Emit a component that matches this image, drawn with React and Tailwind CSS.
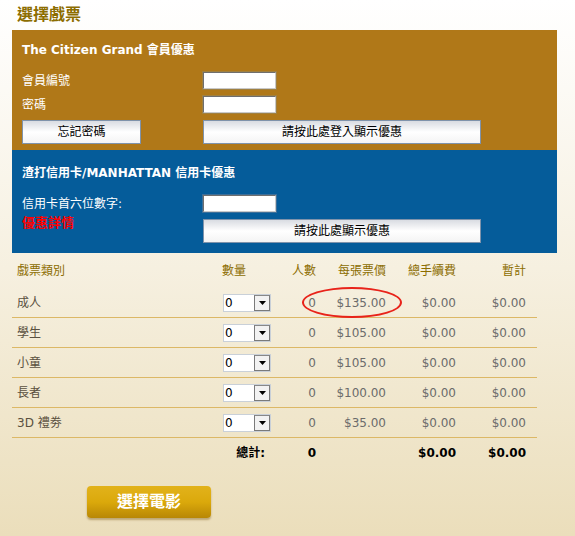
import React from "react";

const font = { fontFamily: '"DejaVu Sans", "Noto Sans CJK TC", sans-serif' };

const rows = [
  { name: "成人", price: "$135.00", circled: true },
  { name: "學生", price: "$105.00" },
  { name: "小童", price: "$105.00" },
  { name: "長者", price: "$100.00" },
  { name: "3D 禮劵", price: "$35.00" },
];

function TextBox({ ring }) {
  return (
    <div
      className={`w-[73px] h-[17px] bg-white border border-t-[#6f6f6f] border-l-[#6f6f6f] border-b-[#c9c9c9] border-r-[#c9c9c9] ${ring}`}
    />
  );
}

function PlainButton({ children, className }) {
  return (
    <button
      className={`h-[24px] border border-[#7f93ab] bg-gradient-to-b from-[#d9dce2] via-white to-[#f4f4f4] text-[12px] text-black ${className}`}
    >
      {children}
    </button>
  );
}

function QtySelect() {
  return (
    <div className="flex w-[48px] h-[18px] bg-white border border-[#c9d0d8] items-stretch">
      <span className="flex-1 pl-[1px] text-[12px] leading-[16px] text-black">0</span>
      <span className="w-[16px] border border-[#7a7a7a] border-t-[#888] bg-[#f2f2f2] flex items-center justify-center">
        <svg width="7" height="4" viewBox="0 0 7 4">
          <path d="M0 0h7L3.5 4z" fill="#000" />
        </svg>
      </span>
    </div>
  );
}

const cols = "grid grid-cols-[208px_56px_40px_70px_70px_70px]";

export default function App() {
  return (
    <div
      className="w-[575px] h-[536px] overflow-hidden bg-gradient-to-b from-white via-[#f6f0e0] to-[#ebdebb]"
      style={font}
    >
      <div className="h-[30px] pl-[17px] pt-[5px]">
        <h1 className="text-[16px] font-bold leading-[20px] text-[#8c6d00]">選擇戲票</h1>
      </div>

      {/* 會員優惠 */}
      <div className="ml-[12px] w-[545px] h-[120px] bg-[#b07818] px-[10px] pt-[10px] text-white">
        <div className="text-[12px] font-bold h-[20px] leading-[20px]">The Citizen Grand 會員優惠</div>
        <div className="mt-[12px] flex items-center h-[17px]">
          <span className="w-[181px] text-[12px]">會員編號</span>
          <TextBox ring="shadow-[0_0_0_1px_#a08040]" />
        </div>
        <div className="mt-[7px] flex items-center h-[17px]">
          <span className="w-[181px] text-[12px]">密碼</span>
          <TextBox ring="shadow-[0_0_0_1px_#a08040]" />
        </div>
        <div className="mt-[7px] flex">
          <PlainButton className="w-[119px]">忘記密碼</PlainButton>
          <PlainButton className="ml-[62px] w-[278px]">請按此處登入顯示優惠</PlainButton>
        </div>
      </div>

      {/* 信用卡優惠 */}
      <div className="ml-[12px] w-[545px] h-[103px] bg-[#055c9a] px-[10px] pt-[13px] text-white">
        <div className="text-[12px] font-bold h-[20px] leading-[20px]">渣打信用卡/MANHATTAN 信用卡優惠</div>
        <div className="mt-[12px] flex items-center h-[17px]">
          <span className="w-[181px] text-[12px]">信用卡首六位數字:</span>
          <TextBox ring="shadow-[0_0_0_1px_#3d6f99]" />
        </div>
        <div className="mt-[2px] flex items-start">
          <span className="w-[181px] text-[13px] font-bold text-[#ff0000] leading-[18px]">優惠詳情</span>
          <PlainButton className="mt-[5px] w-[278px]">請按此處顯示優惠</PlainButton>
        </div>
      </div>

      {/* 戲票表 */}
      <div className="ml-[12px] w-[525px] text-[12px]">
        <div className={`${cols} h-[35px] items-center text-[#8c6d00]`}>
          <span className="pl-[5px]">戲票類別</span>
          <span className="pl-[2px]">數量</span>
          <span className="text-right">人數</span>
          <span className="text-right">每張票價</span>
          <span className="text-right">總手續費</span>
          <span className="text-right">暫計</span>
        </div>
        {rows.map((r) => (
          <div
            key={r.name}
            className={`relative ${cols} h-[30px] items-center border-b border-[#dcb866] text-[#6b6b6b]`}
          >
            <span className="pl-[5px] text-[#5a5040]">{r.name}</span>
            <span className="pl-[3px]">
              <QtySelect />
            </span>
            <span className="text-right">0</span>
            <span className="text-right">{r.price}</span>
            <span className="text-right">$0.00</span>
            <span className="text-right">$0.00</span>
            {r.circled && (
              <span className="absolute left-[290px] top-[-1px] w-[100px] h-[31px] rounded-[50%] border-2 border-[#e8231a]" />
            )}
          </div>
        ))}
        <div className={`${cols} h-[30px] items-center font-bold text-black`}>
          <span />
          <span className="text-right pr-[11px]">總計:</span>
          <span className="text-right">0</span>
          <span />
          <span className="text-right">$0.00</span>
          <span className="text-right">$0.00</span>
        </div>
      </div>

      <div className="mt-[18px] ml-[87px]">
        <button className="w-[124px] h-[32px] rounded-[4px] bg-gradient-to-b from-[#e2b21a] via-[#dba90b] to-[#b88706] text-white text-[16px] font-bold shadow-[0_2px_2px_rgba(120,80,0,0.4)]">
          選擇電影
        </button>
      </div>
    </div>
  );
}
